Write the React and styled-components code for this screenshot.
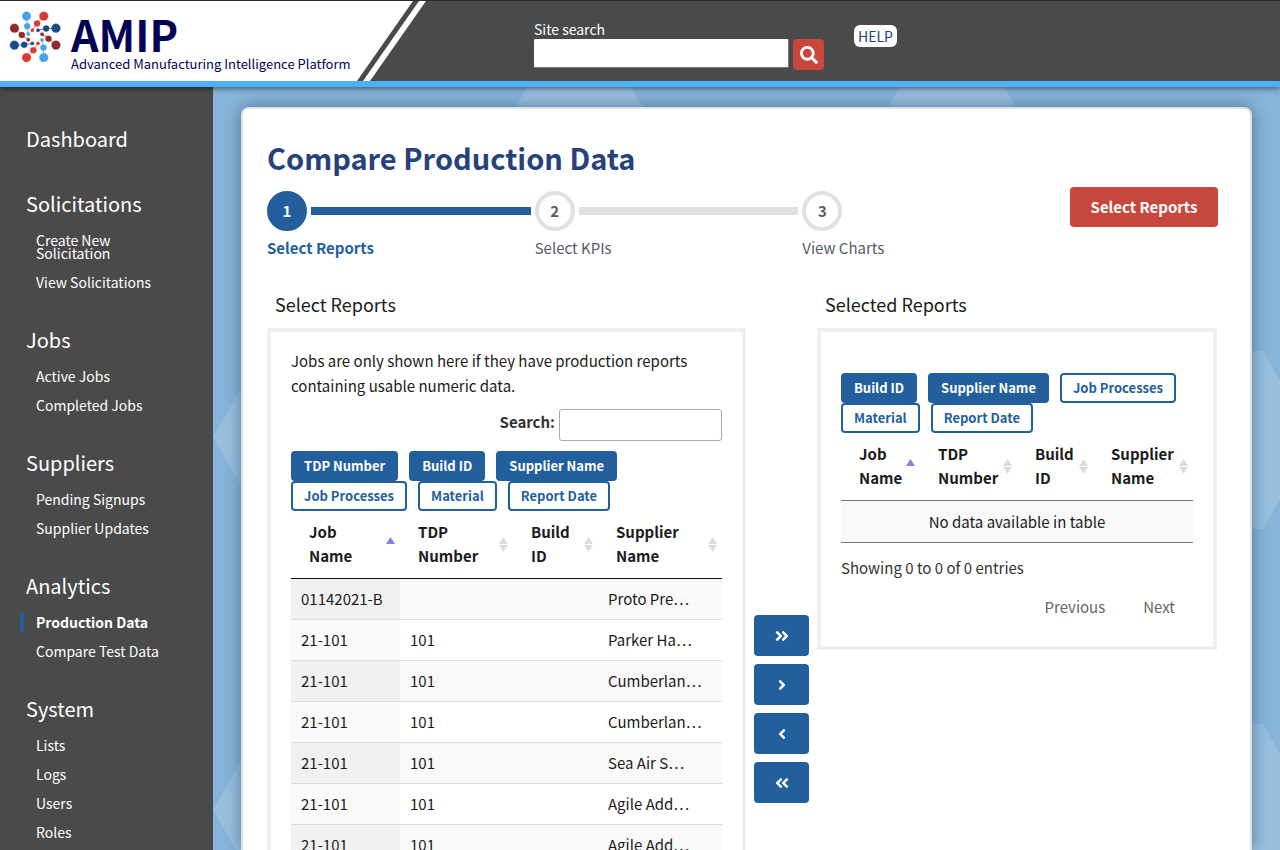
import React from "react";
import styled, { createGlobalStyle } from "styled-components";
import {
  FaSearch,
  FaAngleDoubleRight,
  FaAngleRight,
  FaAngleLeft,
  FaAngleDoubleLeft,
} from "react-icons/fa";

const BLUE = "#235f9d";
const RED = "#c8473c";
const NAVY = "#27427a";
const INK = "#1b1b1b";

const GlobalStyle = createGlobalStyle`
  *, *::before, *::after { box-sizing: border-box; }
  body {
    margin: 0;
    color: ${INK};
    background: #88b4da;
    font: 15px/25px "Noto Sans CJK SC", "Noto Sans", sans-serif;
  }
  h1, h2, p, ul, ol { margin: 0; padding: 0; }
  ul, ol { list-style: none; }
  button, input { font: inherit; }
  a { color: inherit; text-decoration: none; }
`;

const Page = styled.div`
  height: 100vh;
  display: flex;
  flex-direction: column;
  overflow: hidden;
`;

const Header = styled.header`
  position: relative;
  z-index: 1;
  flex: none;
  display: flex;
  height: 87px;
  background: #4a4a4a;
  border-top: 1px solid #2a2a2c;
  border-bottom: 6px solid #4db2fb;
  box-shadow: 0 1px 6px rgba(0, 0, 0, 0.6);
`;

const Brand = styled.a`
  flex: none;
  width: 357px;
  display: flex;
  gap: 10px;
  padding: 9px 0 0 9px;
  background: #fff;
  color: #030353;
`;

const BrandText = styled.span`
  display: flex;
  flex-direction: column;
  white-space: nowrap;
`;

const BrandName = styled.span`
  font-size: 43px;
  font-weight: 700;
  line-height: 46px;
`;

const BrandTag = styled.span`
  font-size: 13px;
  line-height: 16px;
`;

const Slash = styled.svg`
  flex: none;
  display: block;
  width: 70px;
  height: 80px;
`;

const SearchForm = styled.form`
  display: flex;
  align-items: flex-end;
  gap: 4px;
  height: 69px;
  margin-left: 107px;
`;

const SearchField = styled.div`
  display: flex;
  flex-direction: column;
  color: #fff;
  padding-bottom: 2px;
`;

const SearchLabel = styled.label`
  font-size: 14px;
  line-height: 20px;
`;

const SiteInput = styled.input`
  width: 255px;
  height: 29px;
  border: 1px solid #767676;
  border-top-color: #fff;
  border-left-color: #fff;
  border-radius: 2px;
  background: #fff;
`;

const SearchButton = styled.button`
  display: grid;
  place-items: center;
  width: 31px;
  height: 31px;
  padding: 0;
  border: 0;
  border-radius: 4px;
  color: #fff;
  background: ${RED};
  font-size: 18px;
`;

const Help = styled.a`
  align-self: flex-start;
  margin: 24px 0 0 30px;
  padding: 0 4px;
  border-radius: 6px;
  background: #fff;
  color: ${NAVY};
  font-size: 14px;
  line-height: 22px;
`;

const Body = styled.div`
  flex: 1;
  min-height: 0;
  display: flex;
`;

const Sidebar = styled.nav`
  flex: none;
  width: 213px;
  padding: 39px 28px 0 26px;
  background: #4a4a4a;
  color: #fff;
`;

const NavGroup = styled.section`
  padding-bottom: 30px;
`;

const NavHeading = styled.h2`
  font-size: 20px;
  font-weight: 400;
  line-height: 26px;
  padding-bottom: 9px;
`;

const NavItem = styled.li`
  position: relative;
  padding: 8px 0 8px 10px;
  font-size: 14px;
  font-weight: ${(p) => (p.$active ? 700 : 400)};
  line-height: 13px;

  &::before {
    content: "";
    display: ${(p) => (p.$active ? "block" : "none")};
    position: absolute;
    left: -6px;
    top: 4px;
    width: 4px;
    height: 21px;
    border-radius: 2px;
    background: ${BLUE};
  }
`;

const Main = styled.main`
  position: relative;
  flex: 1;
  min-width: 0;
  display: flex;
  padding: 20px 28px 0;
`;

const Backdrop = styled.svg`
  position: absolute;
  inset: 0;
  width: 100%;
  height: 100%;
`;

const Card = styled.div`
  position: relative;
  flex: 1;
  min-width: 0;
  padding: 30px 32px 0 24px;
  border: 2px solid #dfe1e3;
  border-bottom: 0;
  border-radius: 8px 8px 0 0;
  background: #fff;
  box-shadow: 0 0 16px rgba(20, 50, 80, 0.5);
`;

const Title = styled.h1`
  color: ${NAVY};
  font-size: 29px;
  line-height: 36px;
`;

const StepRow = styled.div`
  display: flex;
  align-items: flex-start;
  margin-top: 12px;
`;

const Steps = styled.ol`
  flex: 1;
  display: flex;
  padding-top: 4px;
`;

const Step = styled.li`
  flex: 1;
  color: ${(p) => (p.$current ? BLUE : "#565c65")};
  font-weight: ${(p) => (p.$current ? 700 : 400)};
`;

const StepTrack = styled.div`
  display: flex;
  align-items: center;
  gap: 4px;
  padding-right: 4px;
  margin-bottom: 4px;

  &::after {
    content: "";
    display: ${(p) => (p.$last ? "none" : "block")};
    flex: 1;
    height: 8px;
    background: ${(p) => (p.$current ? BLUE : "#dfe1e2")};
  }
`;

const StepNumber = styled.span`
  display: grid;
  place-items: center;
  width: 40px;
  height: 40px;
  padding-bottom: 2px;
  border: 4px solid ${(p) => (p.$current ? BLUE : "#dfe1e2")};
  border-radius: 50%;
  background: ${(p) => (p.$current ? BLUE : "#fff")};
  color: ${(p) => (p.$current ? "#fff" : "#565c65")};
  font-size: 15px;
  font-weight: 700;
`;

const PrimaryButton = styled.button`
  width: 148px;
  height: 40px;
  padding: 0 0 2px;
  border: 0;
  border-radius: 4px;
  background: ${RED};
  color: #fff;
  font-weight: 700;
`;

const Columns = styled.div`
  display: grid;
  grid-template-columns: minmax(0, 479fr) 55px minmax(0, 400fr);
  column-gap: 8px;
  align-items: start;
  padding: 30px 1px 0 0;
`;

const PanelHeading = styled.h2`
  padding-left: 8px;
  font-size: 18px;
  font-weight: 400;
  line-height: 28px;
  margin-bottom: 10px;
`;

const Panel = styled.div`
  padding: ${(p) => (p.$top ? p.$top : 16)}px 20px 21px;
  border: 4px solid #f0f0f0;
`;

const FilterRow = styled.div`
  display: flex;
  justify-content: flex-end;
  gap: 4px;
  margin: 11px 0 10px;
`;

const FilterLabel = styled.label`
  font-weight: 700;
  color: #333;
`;

const FilterInput = styled.input`
  width: 163px;
  height: 32px;
  border: 1px solid #aaa;
  border-radius: 3px;
  background: #fff;
`;

const Toggles = styled.div`
  display: flex;
  flex-wrap: wrap;
  column-gap: 11px;
`;

const Toggle = styled.button`
  height: 30px;
  padding: 0 11px;
  border: 2px solid ${BLUE};
  border-radius: 4px;
  background: ${(p) => (p.$on ? BLUE : "#fff")};
  color: ${(p) => (p.$on ? "#fff" : BLUE)};
  font-size: 13px;
  font-weight: 700;
  line-height: 24px;
`;

const Table = styled.table`
  width: 100%;
  table-layout: fixed;
  border-collapse: separate;
  border-spacing: 0;
`;

const HeadCell = styled.th`
  padding: 9px 5px 10px 18px;
  border-bottom: 1px solid ${(p) => p.$line};
  text-align: left;
  line-height: 24px;
`;

const HeadInner = styled.div`
  display: flex;
  align-items: center;
  justify-content: space-between;
`;

const HeadText = styled.span`
  width: min-content;
`;

const SortMark = styled.svg`
  flex: none;
  width: 9px;
  height: 15px;
`;

const Row = styled.tr`
  background: #fff;
  &:nth-child(odd) { background: #f9f9f9; }
  & > td:first-child { background: #fafafa; }
  &:nth-child(odd) > td:first-child { background: #f1f1f1; }
`;

const Cell = styled.td`
  height: 41px;
  padding: 0 10px 2px;
  border-bottom: 1px solid #ddd;
  white-space: nowrap;
`;

const EmptyCell = styled.td`
  height: 42px;
  padding: 0 10px;
  border-bottom: 1px solid #777;
  background: #f9f9f9;
  text-align: center;
`;

const Info = styled.p`
  margin-top: 12px;
  color: #333;
`;

const Pager = styled.div`
  display: flex;
  justify-content: flex-end;
  gap: 2px;
  margin-top: 7px;
`;

const PagerButton = styled.button`
  height: 38px;
  padding: 0 18px;
  border: 0;
  background: none;
  color: #666;
`;

const Movers = styled.div`
  display: flex;
  flex-direction: column;
  gap: 8px;
  padding-top: 325px;
`;

const MoveButton = styled.button`
  display: grid;
  place-items: center;
  height: 41px;
  padding: 0;
  border: 0;
  border-radius: 4px;
  background: ${BLUE};
  color: #fff;
  font-size: 16px;
`;

const nav = [
  ["Dashboard", []],
  ["Solicitations", ["Create New Solicitation", "View Solicitations"]],
  ["Jobs", ["Active Jobs", "Completed Jobs"]],
  ["Suppliers", ["Pending Signups", "Supplier Updates"]],
  ["Analytics", ["Production Data", "Compare Test Data"]],
  ["System", ["Lists", "Logs", "Users", "Roles"]],
];

const steps = ["Select Reports", "Select KPIs", "View Charts"];
const headings = ["Job Name", "TDP Number", "Build ID", "Supplier Name"];

const reports = [
  ["01142021-B", "", "", "Proto Pre…"],
  ["21-101", "101", "", "Parker Ha…"],
  ["21-101", "101", "", "Cumberlan…"],
  ["21-101", "101", "", "Cumberlan…"],
  ["21-101", "101", "", "Sea Air S…"],
  ["21-101", "101", "", "Agile Add…"],
  ["21-101", "101", "", "Agile Add…"],
];

const arms = [
  ["#45a4e4", [80, 47], [82, 77], [85, 100]],
  ["#dd3a35", [131, 47], [111, 69], [97, 89]],
  ["#8f2b2b", [44, 83], [66, 103], [85, 117]],
  ["#1b4c8a", [167, 83], [138, 84], [114, 89]],
  ["#1b4c8a", [44, 133], [73, 132], [97, 128]],
  ["#8f2b2b", [167, 133], [145, 114], [126, 101]],
  ["#dd3a35", [80, 170], [100, 148], [114, 128]],
  ["#45a4e4", [131, 170], [130, 140], [126, 118]],
];

const hexCenters = [
  [103, 350], [103, 723], [366, 89], [739, 89], [998, 353], [998, 726],
];

function hexPoints([x, y]) {
  return [[-103, 0], [-52, -89], [52, -89], [103, 0], [52, 89], [-52, 89]]
    .map(([dx, dy]) => `${x + dx},${y + dy}`)
    .join(" ");
}

function Logo() {
  return (
    <svg width="52" height="52" viewBox="28 29 154 154" aria-hidden="true">
      {arms.map(([color, a, b, c], i) => (
        <g key={i} fill={color} stroke={color}>
          <polyline points={`${a} ${b} ${c}`} fill="none" strokeWidth="2" />
          <circle cx={a[0]} cy={a[1]} r="13" />
          <circle cx={b[0]} cy={b[1]} r="9" />
          <circle cx={c[0]} cy={c[1]} r="5" />
        </g>
      ))}
    </svg>
  );
}

function ReportHead({ widths, line }) {
  return (
    <>
      <colgroup>
        {widths.map((w, i) => (
          <col key={i} width={w} />
        ))}
        <col />
      </colgroup>
      <thead>
        <tr>
          {headings.map((h, i) => (
            <HeadCell key={h} scope="col" $line={line}>
              <HeadInner>
                <HeadText>{h}</HeadText>
                <SortMark viewBox="0 0 9 15" aria-hidden="true">
                  <path d="M4.5 0L9 7H0z" fill={i === 0 ? "#7d83de" : "#dcdcdc"} />
                  {i > 0 && <path d="M0 8H9L4.500 15z" fill="#dcdcdc" />}
                </SortMark>
              </HeadInner>
            </HeadCell>
          ))}
        </tr>
      </thead>
    </>
  );
}

function ColumnToggles({ on, off }) {
  return (
    <Toggles>
      {on.map((t) => (
        <Toggle key={t} type="button" $on aria-pressed="true">{t}</Toggle>
      ))}
      {off.map((t) => (
        <Toggle key={t} type="button" aria-pressed="false">{t}</Toggle>
      ))}
    </Toggles>
  );
}

export default function App() {
  return (
    <Page>
      <GlobalStyle />
      <Header>
        <Brand href="#">
          <Logo />
          <BrandText>
            <BrandName>AMIP</BrandName>
            <BrandTag>Advanced Manufacturing Intelligence Platform</BrandTag>
          </BrandText>
        </Brand>
        <Slash viewBox="0 0 70 80" aria-hidden="true">
          <path d="M0 0H56L0 80z" fill="#fff" />
          <path d="M62 0H69L13 80H6z" fill="#fff" />
        </Slash>
        <SearchForm>
          <SearchField>
            <SearchLabel htmlFor="site-search">Site search</SearchLabel>
            <SiteInput id="site-search" type="text" />
          </SearchField>
          <SearchButton type="button" aria-label="Search">
            <FaSearch />
          </SearchButton>
        </SearchForm>
        <Help href="#">HELP</Help>
      </Header>
      <Body>
        <Sidebar>
          {nav.map(([heading, items]) => (
            <NavGroup key={heading}>
              <NavHeading>
                {items.length ? heading : <a href="#">{heading}</a>}
              </NavHeading>
              <ul>
                {items.map((item) => (
                  <NavItem key={item} $active={item === "Production Data"}>
                    <a href="#">{item}</a>
                  </NavItem>
                ))}
              </ul>
            </NavGroup>
          ))}
        </Sidebar>
        <Main>
          <Backdrop aria-hidden="true">
            {hexCenters.map((c) => (
              <polygon key={c.join()} points={hexPoints(c)} fill="#fff" fillOpacity="0.15" />
            ))}
          </Backdrop>
          <Card>
            <Title>Compare Production Data</Title>
            <StepRow>
              <Steps>
                {steps.map((s, i) => (
                  <Step key={s} $current={i === 0}>
                    <StepTrack $current={i === 0} $last={i === steps.length - 1}>
                      <StepNumber $current={i === 0}>{i + 1}</StepNumber>
                    </StepTrack>
                    {s}
                  </Step>
                ))}
              </Steps>
              <PrimaryButton type="button">Select Reports</PrimaryButton>
            </StepRow>
            <Columns>
              <section>
                <PanelHeading>Select Reports</PanelHeading>
                <Panel>
                  <p>
                    Jobs are only shown here if they have production reports containing
                    usable numeric data.
                  </p>
                  <FilterRow>
                    <FilterLabel htmlFor="report-filter">Search:</FilterLabel>
                    <FilterInput id="report-filter" type="search" />
                  </FilterRow>
                  <ColumnToggles
                    on={["TDP Number", "Build ID", "Supplier Name"]}
                    off={["Job Processes", "Material", "Report Date"]}
                  />
                  <Table>
                    <ReportHead widths={[109, 113, 85]} line="#111" />
                    <tbody>
                      {reports.map((r, i) => (
                        <Row key={i}>
                          {r.map((v, j) => (
                            <Cell key={j}>{v}</Cell>
                          ))}
                        </Row>
                      ))}
                    </tbody>
                  </Table>
                </Panel>
              </section>
              <Movers>
                <MoveButton type="button" aria-label="Add all"><FaAngleDoubleRight /></MoveButton>
                <MoveButton type="button" aria-label="Add"><FaAngleRight /></MoveButton>
                <MoveButton type="button" aria-label="Remove"><FaAngleLeft /></MoveButton>
                <MoveButton type="button" aria-label="Remove all"><FaAngleDoubleLeft /></MoveButton>
              </Movers>
              <section>
                <PanelHeading>Selected Reports</PanelHeading>
                <Panel $top={41}>
                  <ColumnToggles
                    on={["Build ID", "Supplier Name"]}
                    off={["Job Processes", "Material", "Report Date"]}
                  />
                  <Table>
                    <ReportHead widths={[79, 97, 76]} line="#777" />
                    <tbody>
                      <tr>
                        <EmptyCell colSpan={4}>No data available in table</EmptyCell>
                      </tr>
                    </tbody>
                  </Table>
                  <Info>Showing 0 to 0 of 0 entries</Info>
                  <Pager>
                    <PagerButton type="button">Previous</PagerButton>
                    <PagerButton type="button">Next</PagerButton>
                  </Pager>
                </Panel>
              </section>
            </Columns>
          </Card>
        </Main>
      </Body>
    </Page>
  );
}
